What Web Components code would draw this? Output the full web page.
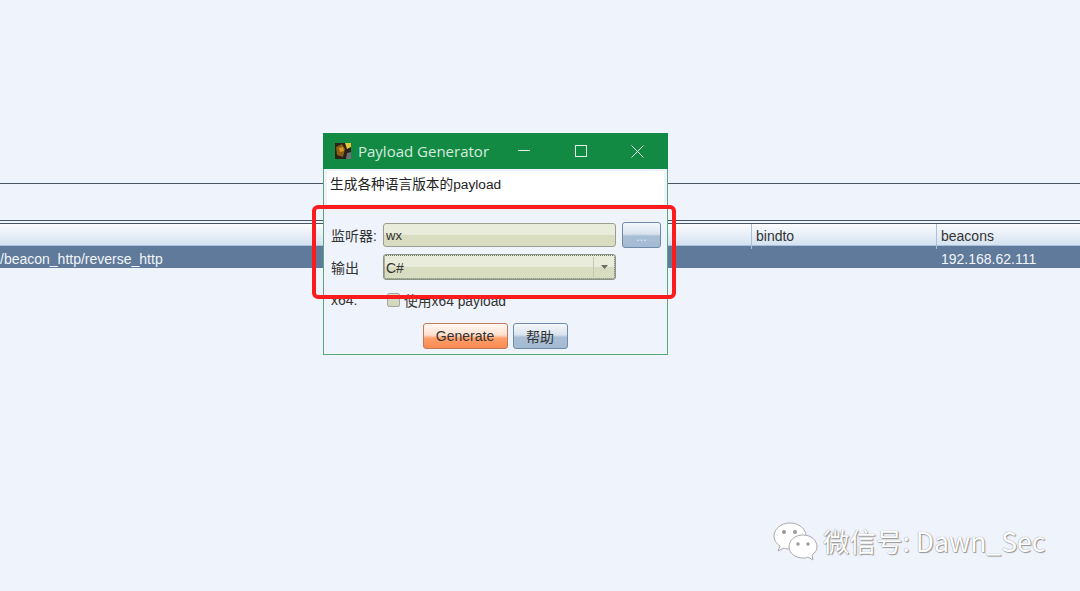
<!DOCTYPE html>
<html>
<head>
<meta charset="utf-8">
<title>Payload Generator</title>
<style>
  html, body { margin: 0; height: 100%; background: #eff3fb; overflow: hidden; }
  body { font-family: "Liberation Sans", "Noto Sans CJK SC", sans-serif; font-size: 14px; }
</style>
</head>
<body>
<app-desktop>
  <listener-table></listener-table>
  <payload-dialog></payload-dialog>
  <red-mark></red-mark>
  <wechat-mark></wechat-mark>
</app-desktop>

<script>
// background with the listener table behind the dialog
class AppDesktop extends HTMLElement {
  constructor() {
    super();
    this.attachShadow({ mode: "open" });
    this.shadowRoot.innerHTML = `
      <style>
        :host { display: block; position: relative; width: 1080px; height: 591px; overflow: hidden; }
      </style>
      <slot></slot>
    `;
  }
}

class ListenerTable extends HTMLElement {
  constructor() {
    super();
    this.attachShadow({ mode: "open" });
    this.shadowRoot.innerHTML = `
      <style>
        :host { display: block; padding-top: 183px; color: #333; }
        .rule { height: 1px; background: #4a5563; }
        .gap { height: 36px; }
        .gap2 { height: 2px; }
        .head {
          display: grid; grid-template-columns: 751px 185px 1fr; height: 22px;
          background: linear-gradient(#fbfcfe, #d5e2f1);
          border-bottom: 1px solid #a9c0da; box-sizing: border-box;
        }
        .head div { padding-left: 4px; line-height: 25px; border-left: 1px solid #a9c0da; }
        .head div:first-child { border-left: 0; }
        .row {
          display: grid; grid-template-columns: 751px 185px 1fr; height: 22px; line-height: 27px;
          background: #5f7a9a; color: #f2f5f9;
        }
        .row div { padding-left: 5px; white-space: nowrap; overflow: hidden; }
        .row div:first-child { padding-left: 0; }
      </style>
      <div class="rule"></div>
      <div class="gap"></div>
      <div class="rule"></div>
      <div class="gap2"></div>
      <div class="rule"></div>
      <div class="head"><div></div><div>bindto</div><div>beacons</div></div>
      <div class="row"><div>/beacon_http/reverse_http</div><div></div><div>192.168.62.111</div></div>
    `;
  }
}

class FieldBox extends HTMLElement {
  constructor() {
    super();
    this.attachShadow({ mode: "open" });
    this.shadowRoot.innerHTML = `
      <style>
        :host {
          display: flex; align-items: center; box-sizing: border-box; height: 24px;
          border: 1px solid #9c9f8e; border-radius: 3px; padding-left: 2px;
          background: linear-gradient(#e9ebdb 0 50%, #d8dcc0 50% 100%);
          color: #333; font-size: 13px;
        }
        :host([select]) {
          height: 26px; font-size: 14px; width: 233px;
          outline: 1px dotted #6d7768; outline-offset: -2px; border-color: #8b9484;
        }
        .text { flex: 1; padding-top: 1px; }
        .arrow {
          width: 20px; align-self: stretch; margin: 2px 1px 2px 0; display: none;
          border-left: 1px solid #c5c9ae; align-items: center; justify-content: center;
        }
        :host([select]) .arrow { display: flex; }
        svg { display: block; }
      </style>
      <span class="text"><slot></slot></span>
      <span class="arrow"><svg width="7" height="4" viewBox="0 0 7 4"><path d="M0 0H7L3.5 4Z" fill="#6b6e60"/></svg></span>
    `;
  }
}

class SkinButton extends HTMLElement {
  constructor() {
    super();
    this.attachShadow({ mode: "open" });
    this.shadowRoot.innerHTML = `
      <style>
        :host {
          display: flex; align-items: center; justify-content: center; box-sizing: border-box;
          height: 26px; border: 1px solid #6f8ba9; border-radius: 3px; color: #333; font-size: 14px;
          background: linear-gradient(#f5f8fb, #d9e3ee 45%, #a9bfd6 55%, #a3bad3);
        }
        :host([kind="go"]) {
          border-color: #c27a5c;
          background: linear-gradient(#fff8f3, #ffe1d0 45%, #ff9d68 60%, #fb8a52);
        }
      </style>
      <slot></slot>
    `;
  }
}

class PayloadDialog extends HTMLElement {
  constructor() {
    super();
    this.attachShadow({ mode: "open" });
    this.shadowRoot.innerHTML = `
      <style>
        :host {
          position: absolute; left: 323px; top: 133px; width: 345px; height: 222px; box-sizing: border-box;
          display: flex; flex-direction: column; background: #eff3fb;
          border: 1px solid #5aa877; border-top: 0; color: #333;
        }
        .title {
          display: flex; align-items: center; height: 36px; margin: 0 -1px; padding: 0 2px 0 12px;
          background: #128a43; color: #d5ecdf; font: 15px "Open Sans", "Liberation Sans", sans-serif;
        }
        .title span { margin-left: 7px; flex: 1; }
        .logo { width: 16px; height: 16px; }
        .ctl { width: 57px; display: flex; justify-content: center; }
        .ctl svg { display: block; }
        .desc {
          background: #fff; margin: 2px 3px 0 3px; height: 33px; padding: 5px 0 0 3px; box-sizing: border-box;
          line-height: 18px; color: #222; font-size: 13.7px;
        }
        .form {
          display: grid; grid-template-columns: 52px 233px 45px; grid-template-rows: 26px 26px 26px;
          row-gap: 6px; align-items: center; margin: 18px 0 0 7px;
        }
        .lb { margin-top: -1px; }
        .btn-more { margin-left: 6px; width: 39px; color: #e9eff6; font-size: 12px; padding-top: 3px; }
        .check { display: flex; align-items: center; gap: 4px; padding-left: 4px; margin-top: 1px; font-size: 13.8px; }
        .box {
          width: 13px; height: 14px; box-sizing: border-box; border: 1px solid #a6a898; border-radius: 2px;
          background: linear-gradient(#dcdecb, #d2d5bb);
        }
        .x64 { margin-top: 2px; }
        .actions { display: flex; justify-content: center; gap: 5px; margin-top: 11px; padding-right: 1px; }
        .actions .gen { width: 85px; }
        .actions .help { width: 55px; }
      </style>
      <div class="title">
        <svg class="logo" viewBox="0 0 16 16">
          <rect width="16" height="16" fill="#2a2118"/>
          <path d="M1 4L7 1L10 6L8 14L2 12Z" fill="#8a5f18"/>
          <path d="M10 0H16V4L12 6Z" fill="#e3c53a"/>
          <path d="M4 5L8 4L9 8L5 9Z" fill="#d89a24"/>
          <path d="M12 10L16 9V16H11Z" fill="#6d6f78"/>
        </svg>
        <span>Payload Generator</span>
        <div class="ctl"><svg width="12" height="12" viewBox="0 0 12 12"><path d="M0 5.5H12" stroke="#e4f2ea" fill="none"/></svg></div>
        <div class="ctl"><svg width="12" height="12" viewBox="0 0 12 12"><rect x=".5" y=".5" width="11" height="11" stroke="#e4f2ea" fill="none"/></svg></div>
        <div class="ctl"><svg width="13" height="13" viewBox="0 0 13 13"><path d="M.5 .5L12.5 12.5M12.5 .5L.5 12.5" stroke="#e4f2ea" fill="none"/></svg></div>
      </div>
      <div class="desc">生成各种语言版本的payload</div>
      <div class="form">
        <div class="lb">监听器:</div>
        <field-box>wx</field-box>
        <skin-button class="btn-more">...</skin-button>
        <div class="lb">输出</div>
        <field-box select>C#</field-box>
        <div></div>
        <div class="x64">x64:</div>
        <div class="check"><span class="box"></span><span>使用x64 payload</span></div>
      </div>
      <div class="actions">
        <skin-button class="gen" kind="go">Generate</skin-button>
        <skin-button class="help">帮助</skin-button>
      </div>
    `;
  }
}

// red annotation drawn over the screenshot
class RedMark extends HTMLElement {
  constructor() {
    super();
    this.attachShadow({ mode: "open" });
    this.shadowRoot.innerHTML = `
      <style>
        :host {
          position: absolute; left: 312px; top: 205px; width: 364px; height: 94px; box-sizing: border-box;
          border: 4px solid #fb1d1d; border-radius: 6px;
        }
      </style>
    `;
  }
}

class WechatMark extends HTMLElement {
  constructor() {
    super();
    this.attachShadow({ mode: "open" });
    this.shadowRoot.innerHTML = `
      <style>
        :host {
          position: absolute; left: 773px; top: 522px; display: flex; align-items: center; gap: 5px;
          font: 26.5px "Noto Sans CJK SC", "Noto Sans", sans-serif; color: #fff; height: 40px; white-space: nowrap;
          text-shadow: 0 0 1px #777, 1px 1px 1px #999;
        }
        span { margin-top: -3px; }
        svg { display: block; }
      </style>
      <svg width="45" height="40" viewBox="0 0 45 40">
        <g fill="#fff" stroke="#aaa" stroke-width="1">
          <path d="M17 1C8 1 1 7 1 14C1 18 3 21 7 24L5 29L11 26C13 27 15 27 17 27C26 27 33 21 33 14C33 7 26 1 17 1Z"/>
          <path d="M30 13C22 13 16 18 16 25C16 31 22 36 30 36C32 36 33 36 35 35L40 38L39 33C42 31 44 28 44 25C44 18 38 13 30 13Z"/>
        </g>
        <g fill="#999">
          <circle cx="11" cy="10" r="2"/><circle cx="22" cy="10" r="2"/>
          <circle cx="25" cy="22" r="1.7"/><circle cx="35" cy="22" r="1.7"/>
        </g>
      </svg>
      <span>微信号: Dawn_Sec</span>
    `;
  }
}

customElements.define("app-desktop", AppDesktop);
customElements.define("listener-table", ListenerTable);
customElements.define("field-box", FieldBox);
customElements.define("skin-button", SkinButton);
customElements.define("payload-dialog", PayloadDialog);
customElements.define("red-mark", RedMark);
customElements.define("wechat-mark", WechatMark);
</script>
</body>
</html>
